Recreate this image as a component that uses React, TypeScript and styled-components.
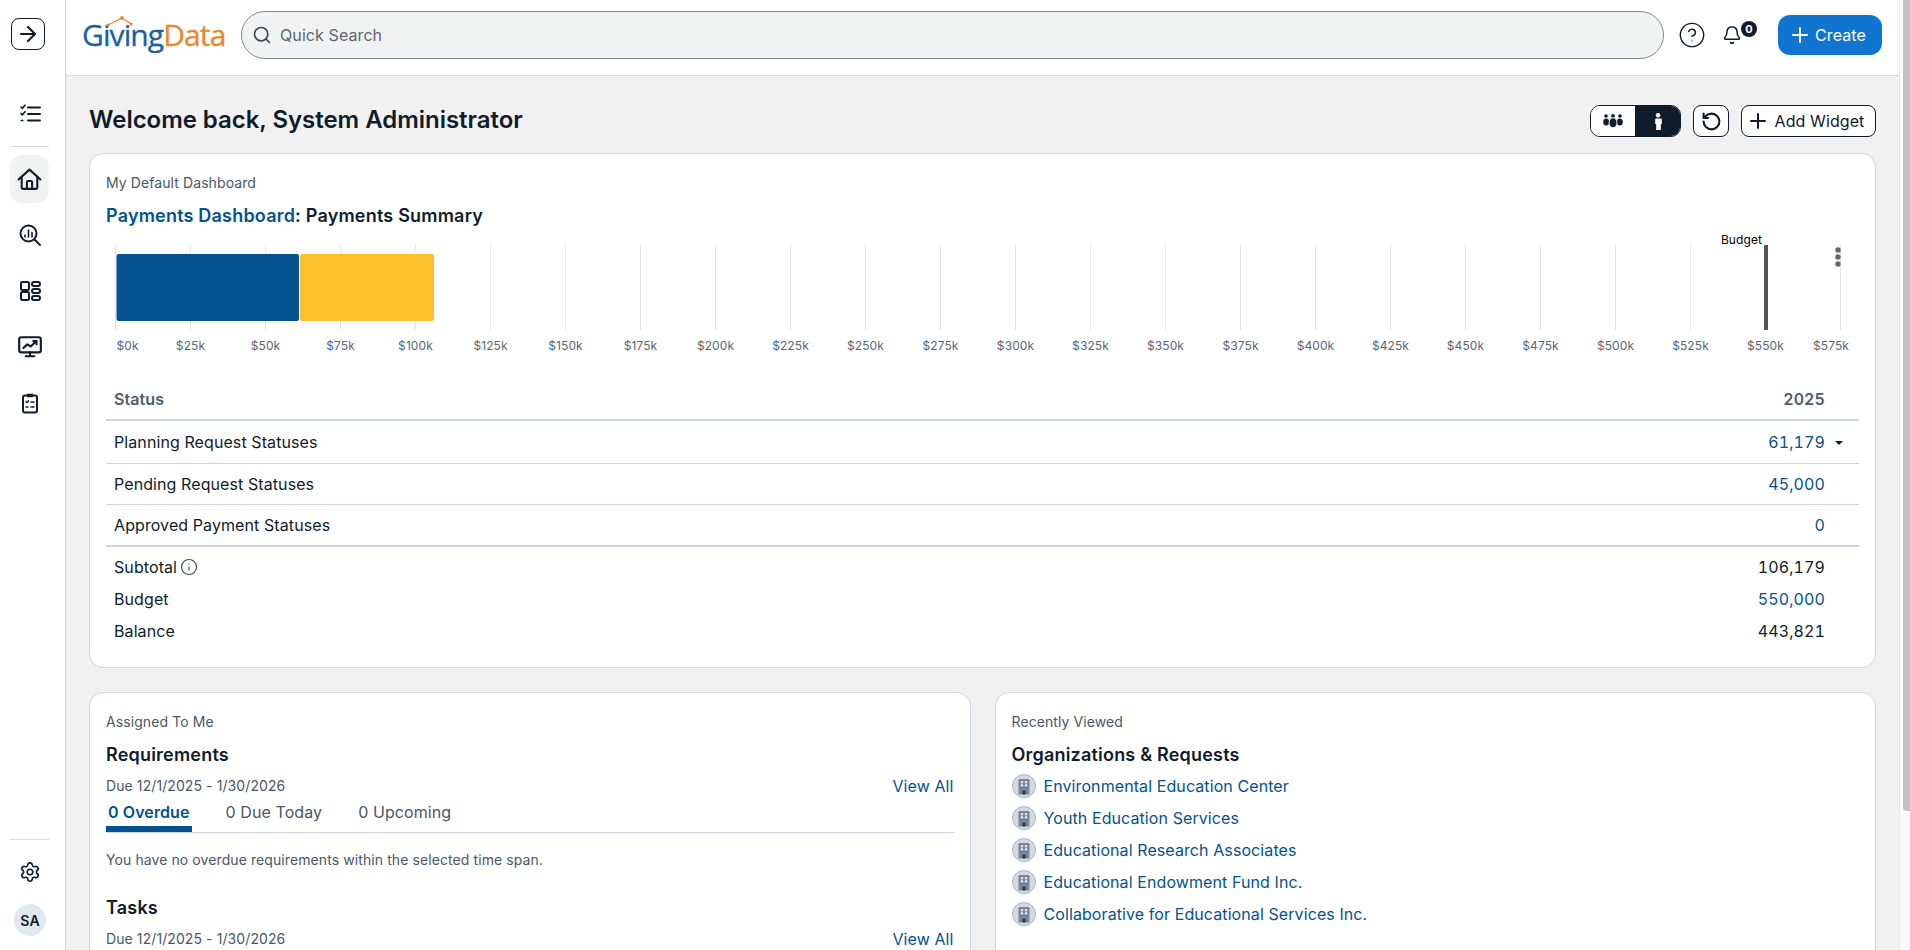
import React from "react";
import styled, { createGlobalStyle } from "styled-components";
import { ArrowRight, Bell, CircleHelp, Info, Plus, RotateCcw, Search, Settings } from "lucide-react";

const GlobalStyle = createGlobalStyle`
  html, body {
    margin: 0;
    height: 100%;
    overflow: hidden;
    background: #f1f1f1;
    font-family: Inter, "Liberation Sans", sans-serif;
    letter-spacing: 0.09px;
    color: #111c2a;
  }
  * { box-sizing: border-box; }
`;

const Shell = styled.div`
  display: flex;
  height: 100vh;
  overflow: hidden;
`;

const Sidebar = styled.aside`
  flex: 0 0 66px;
  display: flex;
  flex-direction: column;
  align-items: flex-start;
  padding: 18px 0 14px 10px;
  background: #fff;
  border-right: 1px solid #cbd5e1;
`;

const ExpandButton = styled.button`
  width: 34px;
  height: 32px;
  margin: 0 0 40px 1px;
  padding: 0;
  display: flex;
  align-items: center;
  justify-content: center;
  background: #fff;
  border: 1px solid #111c2a;
  border-radius: 8px;
  color: #111c2a;
`;

const NavSlot = styled.div<{ $active?: boolean }>`
  width: 39px;
  height: 48px;
  margin-bottom: 8px;
  display: flex;
  align-items: center;
  justify-content: center;
  border-radius: 12px;
  background: ${(p) => (p.$active ? "#f1f3f3" : "transparent")};
  color: #111c2a;
`;

const NavDivider = styled.hr`
  width: 39px;
  margin: 0 0 8px;
  border: 0;
  border-top: 1px solid #d8dde3;
`;

const SidebarFoot = styled.div`
  margin-top: auto;
  display: flex;
  flex-direction: column;
`;

const Avatar = styled.div`
  width: 32px;
  height: 32px;
  margin-left: 4px;
  display: flex;
  align-items: center;
  justify-content: center;
  border-radius: 50%;
  background: #e2e8f0;
  font-size: 14px;
  font-weight: 600;
`;

const Column = styled.div`
  flex: 1;
  min-width: 0;
  display: flex;
  flex-direction: column;
`;

const TopBar = styled.header`
  flex: 0 0 76px;
  display: flex;
  align-items: center;
  padding: 0 17px 5px 16px;
  background: #fff;
  border-bottom: 1px solid #cbd5e1;
`;

const Logo = styled.div`
  position: relative;
  flex: 0 0 143px;
  min-width: 0;
  margin-right: 16px;
  font-family: "Open Sans", sans-serif;
  font-size: 30px;
  line-height: 40px;
  letter-spacing: -0.9px;
  white-space: nowrap;
  -webkit-text-stroke: 0.3px currentColor;
  color: #1c5f9f;
`;

const LogoAccent = styled.span`
  color: #e8872b;
`;

const LogoRoof = styled.svg`
  position: absolute;
  left: 23px;
  top: 0;
`;

const SearchBox = styled.div`
  flex: 1;
  height: 48px;
  display: flex;
  align-items: center;
  gap: 8px;
  padding-left: 10px;
  margin-right: 14px;
  background: #f1f3f3;
  border: 1px solid #7f8c99;
  border-radius: 24px;
  color: #5b6672;
  font-size: 16px;
`;

const HeaderIcon = styled.div<{ $gap: number }>`
  position: relative;
  flex: 0 0 26px;
  height: 26px;
  margin-right: ${(p) => p.$gap}px;
  display: flex;
  align-items: center;
  justify-content: center;
`;

const Badge = styled.span`
  position: absolute;
  top: -1px;
  left: 22px;
  width: 16px;
  height: 16px;
  display: flex;
  align-items: center;
  justify-content: center;
  border-radius: 50%;
  background: #111c2a;
  color: #fff;
  font-size: 11px;
  font-weight: 700;
`;

const CreateButton = styled.button`
  width: 104px;
  height: 40px;
  margin-left: 19px;
  padding: 0 6px 0 0;
  display: flex;
  align-items: center;
  justify-content: center;
  gap: 3px;
  border: 0;
  border-radius: 12px;
  background: #0f75d0;
  color: #fff;
  font-family: inherit;
  font-size: 16px;
  letter-spacing: inherit;
`;

const Main = styled.main`
  flex: 1;
  overflow: hidden;
  padding: 29px 23px 0;
  background: #f1f1f1;
`;

const HeadingRow = styled.div`
  display: flex;
  align-items: center;
  height: 32px;
  margin-bottom: 16px;
  gap: 12px;
`;

const PageTitle = styled.h1`
  flex: 1;
  margin: 0 0 2px;
  font-size: 24px;
  font-weight: 600;
  line-height: 30px;
  letter-spacing: -0.04px;
`;

const Toggle = styled.div`
  display: flex;
  height: 32px;
  border: 1px solid #111c2a;
  border-radius: 10px;
  overflow: hidden;
`;

const ToggleItem = styled.div<{ $on?: boolean }>`
  width: ${(p) => (p.$on ? 45 : 44)}px;
  display: flex;
  align-items: center;
  justify-content: center;
  background: ${(p) => (p.$on ? "#0f1c2a" : "#fff")};
  color: ${(p) => (p.$on ? "#fff" : "#111c2a")};
`;

const OutlineButton = styled.button<{ $wide?: boolean }>`
  width: ${(p) => (p.$wide ? 135 : 36)}px;
  height: 32px;
  padding: 0 ${(p) => (p.$wide ? 7 : 0)}px 0 0;
  display: flex;
  align-items: center;
  justify-content: center;
  gap: 5px;
  background: #fff;
  border: 1px solid #111c2a;
  border-radius: 8px;
  color: #111c2a;
  font-family: inherit;
  font-size: 16px;
  letter-spacing: inherit;
`;

const Card = styled.section`
  padding: 19px 16px 16px;
  background: #fff;
  border: 1px solid #cbd5e1;
  border-radius: 14px;
`;

const Eyebrow = styled.div`
  font-size: 14px;
  line-height: 20px;
  color: #4b5765;
`;

const WidgetTitle = styled.h2`
  margin: 9px 0 2px;
  font-size: 18px;
  font-weight: 600;
  line-height: 28px;
  letter-spacing: 0.2px;
`;

const TitleLink = styled.span`
  color: #04528f;
`;

const ChartSvg = styled.svg`
  display: block;
  margin-bottom: 22px;
  font-family: Inter, sans-serif;
`;

const Row = styled.div<{ $h: number; $rule?: number; $head?: boolean }>`
  display: flex;
  align-items: center;
  justify-content: space-between;
  height: ${(p) => p.$h}px;
  padding: 0 34px 0 8px;
  border-bottom: ${(p) => p.$rule ?? 0}px solid #cbd5e1;
  font-size: 16px;
  font-weight: ${(p) => (p.$head ? 600 : 400)};
  color: ${(p) => (p.$head ? "#505c6a" : "#111c2a")};
`;

const RowLabel = styled.span`
  display: flex;
  align-items: center;
  gap: 3px;
`;

const Amount = styled.span<{ $link?: boolean }>`
  position: relative;
  font-variant-numeric: tabular-nums;
  color: ${(p) => (p.$link ? "#04528f" : "inherit")};
`;

const Caret = styled.i`
  position: absolute;
  left: calc(100% + 10px);
  top: 9px;
  border-left: 4px solid transparent;
  border-right: 4px solid transparent;
  border-top: 4px solid #111c2a;
`;

const Totals = styled.div`
  padding: 4px 0 4px;
`;

const CardGrid = styled.div`
  display: grid;
  grid-template-columns: 1fr 1fr;
  gap: 24px;
  margin-top: 24px;
`;

const LowerCard = styled(Card)`
  height: 340px;
`;

const SectionTitle = styled.h3<{ $gap: number }>`
  margin: ${(p) => p.$gap}px 0 0;
  font-size: 18px;
  font-weight: 600;
  line-height: 24px;
  letter-spacing: 0.2px;
`;

const DueRow = styled.div`
  display: flex;
  justify-content: space-between;
  align-items: center;
  margin-top: 9px;
  font-size: 14px;
  line-height: 20px;
  color: #4b5765;
`;

const ViewAll = styled.a`
  color: #04528f;
  font-size: 16px;
`;

const TabRow = styled.div`
  display: flex;
  gap: 32px;
  height: 37px;
  border-bottom: 1px solid #cbd5e1;
`;

const Tab = styled.div<{ $active?: boolean }>`
  height: 36px;
  padding: 4px 2px 0;
  font-size: 16px;
  line-height: 24px;
  font-weight: ${(p) => (p.$active ? 600 : 400)};
  color: ${(p) => (p.$active ? "#04528f" : "#4b5765")};
  border-bottom: 6px solid ${(p) => (p.$active ? "#04528f" : "transparent")};
`;

const EmptyNote = styled.p`
  margin: 17px 0 0;
  font-size: 14px;
  line-height: 20px;
  color: #4b5765;
`;

const RecentList = styled.ul`
  margin: 3px 0 0;
  padding: 0;
  list-style: none;
`;

const RecentItem = styled.li`
  display: flex;
  align-items: center;
  gap: 8px;
  height: 32px;
  font-size: 16px;
  color: #04528f;
`;

const OrgBadge = styled.svg`
  flex: 0 0 24px;
`;

const ScrollTrack = styled.div`
  flex: 0 0 11px;
  padding: 0 0 0 3px;
  background: #fafafa;
  border-left: 1px solid #e8e8e8;
`;

const ScrollThumb = styled.div`
  height: 811px;
  background: #c1c1c1;
  border-radius: 0 0 0 4px;
`;

const ticks = Array.from({ length: 24 }, (_, i) => i * 25);

const ChecklistIcon = () => (
  <svg width="24" height="24" viewBox="0 0 24 24" fill="none" stroke="currentColor" strokeWidth="2" strokeLinecap="round" strokeLinejoin="round">
    <path d="M10 5.5h12M10 12h12M10 18.5h12" />
    <path d="M3 5l1.3 1.4L7 3.2M3 11.5l1.3 1.4L7 9.7M3.2 18.5h1.6" strokeWidth="1.6" />
  </svg>
);

const HomeIcon = () => (
  <svg width="25" height="25" viewBox="0 0 24 24" fill="none" stroke="currentColor" strokeWidth="2" strokeLinecap="round" strokeLinejoin="round">
    <path d="M1.5 12 12 2.5 22.5 12" />
    <path d="M4.5 10v9.5a1.5 1.5 0 0 0 1.5 1.5h12a1.5 1.5 0 0 0 1.5-1.5V10" />
    <path d="M9.5 21v-6.5a1 1 0 0 1 1-1h3a1 1 0 0 1 1 1V21" />
  </svg>
);

const SearchAnalyticsIcon = () => (
  <svg width="24" height="24" viewBox="0 0 24 24" fill="none" stroke="currentColor" strokeWidth="2" strokeLinecap="round">
    <circle cx="10.5" cy="10.5" r="8" />
    <path d="M16.5 16.5 22 22" />
    <path d="M7 14v-2M10.5 14V7M14 14V9.5" strokeWidth="1.6" />
  </svg>
);

const BoardIcon = () => (
  <svg width="24" height="24" viewBox="0 0 24 24" fill="none" stroke="currentColor" strokeWidth="2">
    <rect x="3" y="3" width="8" height="8" rx="1.5" />
    <rect x="3" y="13" width="8" height="8" rx="1.5" />
    <rect x="14" y="3" width="8" height="4" rx="2" />
    <rect x="14" y="10" width="8" height="4" rx="2" />
    <rect x="14" y="17" width="8" height="4" rx="2" />
  </svg>
);

const MonitorIcon = () => (
  <svg width="26" height="26" viewBox="0 0 24 24" fill="none" stroke="currentColor" strokeWidth="2" strokeLinecap="round" strokeLinejoin="round">
    <rect x="2" y="3" width="20" height="14" rx="2" />
    <path d="M6 13l3.5-3.5 3 2L18 6.5M15 6.5h3v3" />
    <path d="M12 17v3M8 20.5h8" />
  </svg>
);

const ClipboardIcon = () => (
  <svg width="24" height="24" viewBox="0 0 24 24" fill="none" stroke="currentColor" strokeWidth="2" strokeLinecap="round" strokeLinejoin="round">
    <rect x="5" y="4.5" width="14" height="17" rx="2" />
    <path d="M9.5 5.5V3.5h5v2z" fill="currentColor" strokeWidth="1.6" />
    <path d="M8 10.5l1 1 1.5-1.8M13 11h3M8 16h2M13 16h3" strokeWidth="1.4" />
  </svg>
);

const PeopleIcon = () => (
  <svg width="20" height="14" viewBox="0 0 20 14" fill="currentColor">
    <circle cx="3" cy="2" r="1.8" />
    <circle cx="17" cy="2" r="1.8" />
    <ellipse cx="3.2" cy="8" rx="3" ry="3.6" />
    <ellipse cx="16.8" cy="8" rx="3" ry="3.6" />
    <circle cx="10" cy="1.9" r="1.9" />
    <ellipse cx="10" cy="8.8" rx="4" ry="5" stroke="#fff" strokeWidth="0.9" />
  </svg>
);

const PersonIcon = () => (
  <svg width="8" height="17" viewBox="0 0 8 17" fill="currentColor">
    <circle cx="4" cy="2.2" r="2.2" />
    <path d="M1.2 5.4h5.6c.6 0 1 .4 1 1v4.4l-1 .8V17H2.2v-5.4l-1-.8V6.4c0-.6.4-1 1-1z" />
  </svg>
);

const BuildingBadge = () => (
  <OrgBadge width="24" height="24" viewBox="0 0 24 24">
    <circle cx="12" cy="12" r="11.5" fill="#d5d9df" stroke="#aeb5bd" />
    <rect x="6.5" y="5" width="11" height="15.5" rx="1" fill="#76879a" />
    <path d="M8.9 7.3h2.2v1.9H8.9zM12.9 7.3h2.2v1.9h-2.2zM8.9 10.4h2.2v1.9H8.9zM12.9 10.4h2.2v1.9h-2.2z" fill="#fff" />
    <rect x="10.5" y="16.5" width="3" height="4" fill="#2f3b48" />
  </OrgBadge>
);

const recent = [
  "Environmental Education Center",
  "Youth Education Services",
  "Educational Research Associates",
  "Educational Endowment Fund Inc.",
  "Collaborative for Educational Services Inc.",
];

const PaymentsChart = () => (
  <ChartSvg width="1753" height="124" viewBox="0 0 1753 124">
    {ticks.map((t, i) => (
      <line key={t} x1={9.5 + i * 75} x2={9.5 + i * 75} y1="13" y2="98" stroke="#e2e4e7" />
    ))}
    <rect x="10.5" y="22" width="182.5" height="67" rx="2" fill="#04528f" />
    <rect x="194" y="22" width="134" height="67" rx="2" fill="#fcc02e" />
    <rect x="1658" y="13" width="4" height="85" fill="#555" />
    <text x="1656" y="12" textAnchor="end" fontSize="12" fill="#000">Budget</text>
    {ticks.map((t, i) => {
      const first = i === 0;
      const last = i === ticks.length - 1;
      return (
        <text
          key={t}
          x={first ? 10.5 : last ? 1743 : 9.5 + i * 75}
          y="118"
          fontSize="12"
          fill="#5a6775"
          textAnchor={first ? "start" : last ? "end" : "middle"}
        >
          {`$${t}k`}
        </text>
      );
    })}
    <g fill="#666">
      <circle cx="1732" cy="18" r="2.7" />
      <circle cx="1732" cy="25" r="2.7" />
      <circle cx="1732" cy="32" r="2.7" />
    </g>
  </ChartSvg>
);

export default function App() {
  return (
    <Shell>
      <GlobalStyle />
      <Sidebar>
        <ExpandButton aria-label="Expand">
          <ArrowRight size={24} strokeWidth={2.2} />
        </ExpandButton>
        <NavSlot><ChecklistIcon /></NavSlot>
        <NavDivider />
        <NavSlot $active><HomeIcon /></NavSlot>
        <NavSlot><SearchAnalyticsIcon /></NavSlot>
        <NavSlot><BoardIcon /></NavSlot>
        <NavSlot><MonitorIcon /></NavSlot>
        <NavSlot><ClipboardIcon /></NavSlot>
        <SidebarFoot>
          <NavDivider />
          <NavSlot><Settings size={22} strokeWidth={1.8} /></NavSlot>
          <Avatar>SA</Avatar>
        </SidebarFoot>
      </Sidebar>
      <Column>
        <TopBar>
          <Logo>
            Giving<LogoAccent>Data</LogoAccent>
            <LogoRoof width="32" height="14" viewBox="0 0 32 14" fill="#e8872b">
              <path d="M3 10 17 3 26 9" fill="none" stroke="#e8872b" strokeWidth="1.2" />
              <circle cx="3" cy="10" r="1.6" />
              <circle cx="17" cy="3" r="1.9" />
              <circle cx="26" cy="9" r="1.6" />
            </LogoRoof>
          </Logo>
          <SearchBox>
            <Search size={20} strokeWidth={2} color="#3f4a56" />
            Quick Search
          </SearchBox>
          <HeaderIcon $gap={13}><CircleHelp size={28} strokeWidth={1.2} /></HeaderIcon>
          <HeaderIcon $gap={14}>
            <Bell size={20} strokeWidth={1.8} />
            <Badge>0</Badge>
          </HeaderIcon>
          <CreateButton>
            <Plus size={24} strokeWidth={2} />
            Create
          </CreateButton>
        </TopBar>
        <Main>
          <HeadingRow>
            <PageTitle>Welcome back, System Administrator</PageTitle>
            <Toggle>
              <ToggleItem><PeopleIcon /></ToggleItem>
              <ToggleItem $on><PersonIcon /></ToggleItem>
            </Toggle>
            <OutlineButton aria-label="Reset"><RotateCcw size={21} strokeWidth={2.4} /></OutlineButton>
            <OutlineButton $wide>
              <Plus size={24} strokeWidth={2} />
              Add Widget
            </OutlineButton>
          </HeadingRow>
          <Card>
            <Eyebrow>My Default Dashboard</Eyebrow>
            <WidgetTitle>
              <TitleLink>Payments Dashboard</TitleLink>: Payments Summary
            </WidgetTitle>
            <PaymentsChart />
            <Row $h={43} $rule={2} $head>
              <span>Status</span>
              <Amount>2025</Amount>
            </Row>
            <Row $h={43} $rule={1}>
              <span>Planning Request Statuses</span>
              <Amount $link>61,179<Caret /></Amount>
            </Row>
            <Row $h={41} $rule={1}>
              <span>Pending Request Statuses</span>
              <Amount $link>45,000</Amount>
            </Row>
            <Row $h={42} $rule={2}>
              <span>Approved Payment Statuses</span>
              <Amount $link>0</Amount>
            </Row>
            <Totals>
              <Row $h={32}>
                <RowLabel>Subtotal <Info size={18} strokeWidth={1.5} color="#3a4552" /></RowLabel>
                <Amount>106,179</Amount>
              </Row>
              <Row $h={32}>
                <span>Budget</span>
                <Amount $link>550,000</Amount>
              </Row>
              <Row $h={32}>
                <span>Balance</span>
                <Amount>443,821</Amount>
              </Row>
            </Totals>
          </Card>
          <CardGrid>
            <LowerCard>
              <Eyebrow>Assigned To Me</Eyebrow>
              <SectionTitle $gap={11}>Requirements</SectionTitle>
              <DueRow>
                <span>Due 12/1/2025 - 1/30/2026</span>
                <ViewAll>View All</ViewAll>
              </DueRow>
              <TabRow>
                <Tab $active>0 Overdue</Tab>
                <Tab>0 Due Today</Tab>
                <Tab>0 Upcoming</Tab>
              </TabRow>
              <EmptyNote>You have no overdue requirements within the selected time span.</EmptyNote>
              <SectionTitle $gap={26}>Tasks</SectionTitle>
              <DueRow>
                <span>Due 12/1/2025 - 1/30/2026</span>
                <ViewAll>View All</ViewAll>
              </DueRow>
            </LowerCard>
            <LowerCard>
              <Eyebrow>Recently Viewed</Eyebrow>
              <SectionTitle $gap={11}>Organizations &amp; Requests</SectionTitle>
              <RecentList>
                {recent.map((name) => (
                  <RecentItem key={name}>
                    <BuildingBadge />
                    {name}
                  </RecentItem>
                ))}
              </RecentList>
            </LowerCard>
          </CardGrid>
        </Main>
      </Column>
      <ScrollTrack>
        <ScrollThumb />
      </ScrollTrack>
    </Shell>
  );
}
